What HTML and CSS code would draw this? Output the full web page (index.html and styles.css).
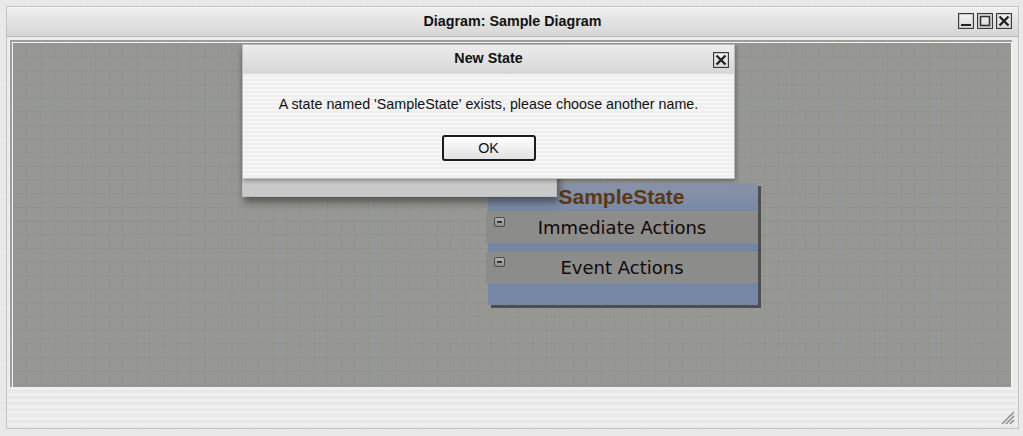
FILE: index.html
```html
<!DOCTYPE html>
<html>
<head>
<meta charset="utf-8">
<link rel="stylesheet" href="styles.css">
</head>
<body>
<div class="window">
  <div class="titlebar">
    <span class="title">Diagram: Sample Diagram</span>
    <div class="wbtns">
      <span class="wbtn"><svg width="14" height="14" viewBox="0 0 14 14"><rect x="2" y="10" width="10" height="2" fill="#222"/></svg></span>
      <span class="wbtn"><svg width="14" height="14" viewBox="0 0 14 14"><rect x="2.5" y="2.5" width="9" height="9" fill="none" stroke="#333" stroke-width="1.6"/></svg></span>
      <span class="wbtn"><svg width="14" height="14" viewBox="0 0 14 14"><path d="M2.5 2.5L11.5 11.5M11.5 2.5L2.5 11.5" stroke="#222" stroke-width="2.4"/></svg></span>
    </div>
  </div>
  <div class="content">
    <div class="frame">
      <div class="canvas">
        <div class="state">
          <div class="state-title">SampleState</div>
          <div class="state-row"><span class="minus"></span>Immediate Actions</div>
          <div class="state-gap"></div>
          <div class="state-row"><span class="minus"></span>Event Actions</div>
        </div>
        <div class="back-dialog"></div>
        <div class="dialog">
          <div class="dlg-title">New State
            <span class="dlg-close"><svg width="14" height="14" viewBox="0 0 14 14"><path d="M2.5 2.5L11.5 11.5M11.5 2.5L2.5 11.5" stroke="#222" stroke-width="2.4"/></svg></span>
          </div>
          <div class="dlg-body">
            <p class="msg">A state named 'SampleState' exists, please choose another name.</p>
            <button class="ok">OK</button>
          </div>
        </div>
      </div>
    </div>
  </div>
  <div class="status">
    <svg class="grip" width="16" height="16" viewBox="0 0 16 16"><path d="M15 3L3 15M15 7L7 15M15 11L11 15" stroke="#888" stroke-width="1.4"/></svg>
  </div>
</div>
</body>
</html>
```

FILE: styles.css
```css
* { box-sizing: border-box; }
html, body { margin: 0; padding: 0; }
body {
  width: 1023px;
  height: 436px;
  overflow: hidden;
  background-color: #e9e9e9;
  background-image: radial-gradient(circle, #dcdcdc 0.6px, transparent 1px);
  background-size: 7px 7px;
  padding: 6px 5px 0 6px;
  font-family: "Liberation Sans", Arial, sans-serif;
}
.window {
  width: 1013px;
  height: 423px;
  border: 1px solid #c4c4c4;
  background: #ececec;
  display: flex;
  flex-direction: column;
}
.titlebar {
  height: 30px;
  flex: none;
  background: linear-gradient(#efefef, #e2e2e2 50%, #d6d6d6);
  border-bottom: 1px solid #b8b8b8;
  border-top: 1px solid #f6f6f6;
  display: flex;
  align-items: center;
  justify-content: center;
  position: relative;
}
.title {
  font-weight: bold;
  font-size: 14.3px;
  color: #111;
  margin-top: -2px;
}
.wbtns {
  position: absolute;
  right: 6px;
  top: 5px;
  display: flex;
  gap: 3px;
}
.wbtn, .dlg-close {
  width: 16px;
  height: 16px;
  border: 1px solid #3a3a3a;
  box-shadow: inset 0 0 0 1px #c8c8c8;
  background: linear-gradient(#f4f4f4, #d8d8d8);
  display: flex;
  align-items: center;
  justify-content: center;
}
.content {
  flex: none;
  padding: 3px 6px 0 3px;
}
.frame {
  height: 347px;
  border-top: 2px solid #9c9c9c;
  border-left: 2px solid #9c9c9c;
  padding: 1px 1px 0 1px;
  background: #f6f6f6;
}
.canvas {
  position: relative;
  width: 998px;
  height: 344px;
  background-color: #979795;
  background-image:
    linear-gradient(90deg, #8f958a 1px, transparent 1px),
    linear-gradient(#8f958a 1px, transparent 1px);
  background-size: 13.67px 13.67px;
  overflow: hidden;
}
.state {
  position: absolute;
  left: 475px;
  top: 140px;
  width: 270px;
  height: 122px;
  background: linear-gradient(#8893a8, #7485a2 30%, #7687a6);
  box-shadow: 3px 3px 0 #4e4e4e;
}
.state-title {
  height: 28px;
  text-align: center;
  font-weight: bold;
  font-size: 21px;
  line-height: 28px;
  color: #5b3811;
  padding-top: 0;
  padding-right: 3px;
}
.state-row {
  position: relative;
  height: 32px;
  margin-left: -2px;
  background: #8c8c8b;
  text-align: center;
  font-family: "DejaVu Sans", Verdana, sans-serif;
  font-size: 18px;
  line-height: 34px;
  color: #120808;
}
.state-gap { height: 8px; }
.minus {
  position: absolute;
  left: 8px;
  top: 6px;
  width: 11px;
  height: 10px;
  border: 1px solid #4a4a4a;
  border-radius: 2px;
  background: linear-gradient(#b4b4b4, #8e8e8e);
}
.minus::after {
  content: "";
  position: absolute;
  left: 2px;
  right: 2px;
  top: 3px;
  height: 2px;
  background: #333;
}
.back-dialog {
  position: absolute;
  left: 229px;
  top: 1px;
  width: 315px;
  height: 153px;
  background: #c9c9c9;
  border: 1px solid #bdbdbd;
  box-shadow: 2px 5px 8px rgba(0,0,0,0.45);
}
.dialog {
  position: absolute;
  left: 229px;
  top: 1px;
  width: 493px;
  height: 135px;
  border: 1px solid #bdbdbd;
  background: repeating-linear-gradient(#f5f5f5 0 2px, #eeeeee 2px 4px);
  box-shadow: 1px 2px 4px rgba(0,0,0,0.3);
  display: flex;
  flex-direction: column;
}
.dlg-title {
  position: relative;
  height: 29px;
  flex: none;
  background: linear-gradient(#ececec, #d6d6d6);
  text-align: center;
  font-weight: bold;
  font-size: 14.3px;
  line-height: 26px;
  color: #111;
}
.dlg-close {
  position: absolute;
  right: 5px;
  top: 7px;
}
.dlg-body {
  display: flex;
  flex-direction: column;
  align-items: center;
}
.msg {
  margin: 22px 0 0 0;
  font-size: 14.3px;
  line-height: 17px;
  color: #111;
}
.ok {
  margin-top: 22px;
  width: 94px;
  height: 26px;
  border: 2px solid #1c1c1c;
  border-radius: 3px;
  background: linear-gradient(#ffffff, #f0f0f0 50%, #e2e2e2);
  font-family: "Liberation Sans", Arial, sans-serif;
  font-size: 14.3px;
  color: #111;
  padding: 0;
}
.status {
  position: relative;
  flex: 1;
  background: repeating-linear-gradient(#efefef 0 3px, #e8e8e8 3px 6px);
}
.grip {
  position: absolute;
  right: 3px;
  bottom: 3px;
}
```
